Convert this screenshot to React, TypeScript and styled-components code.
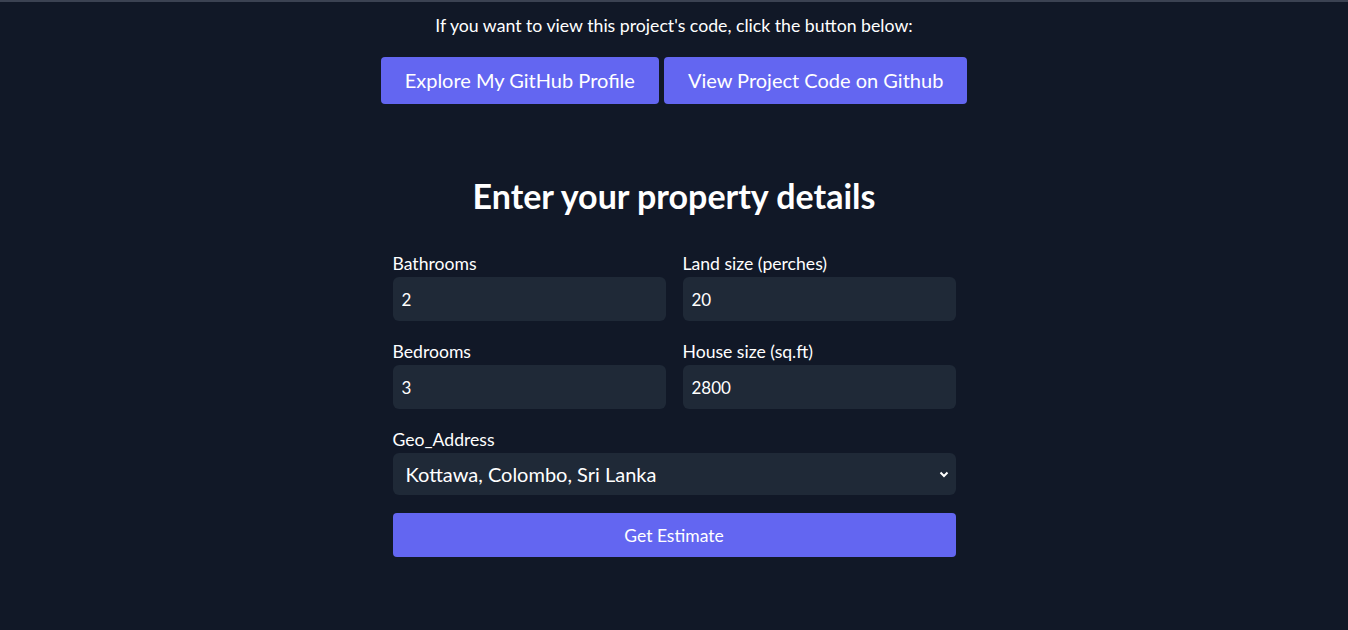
import React from "react";
import styled, { createGlobalStyle } from "styled-components";

const GlobalStyle = createGlobalStyle`
  html, body {
    margin: 0;
    padding: 0;
    background: #111827;
    color: #ffffff;
    font-family: Lato, "Noto Sans", sans-serif;
  }
  * { box-sizing: border-box; }
`;

const Page = styled.div`
  min-height: 630px;
  border-top: 2px solid #3b4252;
  display: flex;
  flex-direction: column;
  align-items: center;
`;

const Intro = styled.p`
  margin: 12px 0 0;
  font-size: 17.7px;
  line-height: 24px;
`;

const LinkRow = styled.div`
  display: flex;
  gap: 5px;
  margin-top: 19px;
`;

const LinkButton = styled.a`
  display: block;
  background: #6366f1;
  color: #ffffff;
  border-radius: 4px;
  padding: 0 24px;
  height: 47px;
  line-height: 47px;
  font-size: 20px;
  text-decoration: none;
`;

const Heading = styled.h1`
  margin: 72px 0 0;
  font-size: 34px;
  line-height: 40px;
  font-weight: 700;
`;

const Form = styled.form`
  width: 563px;
  margin-top: 36px;
  display: flex;
  flex-direction: column;
`;

const Grid = styled.div`
  display: grid;
  grid-template-columns: 1fr 1fr;
  column-gap: 17px;
  row-gap: 19px;
`;

const Field = styled.label<{ $wide?: boolean }>`
  display: flex;
  flex-direction: column;
  gap: 1px;
  margin-top: ${(p) => (p.$wide ? "19px" : "0")};
  font-size: 17.6px;
  line-height: 24px;
`;

const Input = styled.input`
  height: 44px;
  border: none;
  outline: none;
  border-radius: 6px;
  background: #1f2937;
  color: #ffffff;
  font: inherit;
  font-size: 17px;
  padding: 0 9px;
`;

const SelectBox = styled.div`
  position: relative;
`;

const Select = styled.select`
  width: 100%;
  height: 42px;
  border: none;
  outline: none;
  border-radius: 6px;
  background: #1f2937;
  color: #ffffff;
  font: inherit;
  font-size: 20px;
  padding: 0 13px;
  appearance: none;
`;

const Chevron = styled.svg`
  position: absolute;
  right: 6px;
  top: 15px;
  pointer-events: none;
`;

const Submit = styled.button`
  margin-top: 18px;
  height: 44px;
  border: none;
  border-radius: 4px;
  background: #6366f1;
  color: #ffffff;
  font: inherit;
  font-size: 17.5px;
`;

const App: React.FC = () => {
  return (
    <>
      <GlobalStyle />
      <Page>
        <Intro>If you want to view this project's code, click the button below:</Intro>
        <LinkRow>
          <LinkButton href="#">Explore My GitHub Profile</LinkButton>
          <LinkButton href="#">View Project Code on Github</LinkButton>
        </LinkRow>

        <Heading>Enter your property details</Heading>

        <Form onSubmit={(e) => e.preventDefault()}>
          <Grid>
            <Field>
              Bathrooms
              <Input defaultValue="2" />
            </Field>
            <Field>
              Land size (perches)
              <Input defaultValue="20" />
            </Field>
            <Field>
              Bedrooms
              <Input defaultValue="3" />
            </Field>
            <Field>
              House size (sq.ft)
              <Input defaultValue="2800" />
            </Field>
          </Grid>

          <Field $wide>
            Geo_Address
            <SelectBox>
              <Select defaultValue="kottawa">
                <option value="kottawa">Kottawa, Colombo, Sri Lanka</option>
              </Select>
              <Chevron width="12" height="12" viewBox="0 0 12 12">
                <path d="M2.5 4.5 L6 8 L9.5 4.5" stroke="#fff" strokeWidth="2" fill="none" />
              </Chevron>
            </SelectBox>
          </Field>

          <Submit type="submit">Get Estimate</Submit>
        </Form>
      </Page>
    </>
  );
};

export default App;
